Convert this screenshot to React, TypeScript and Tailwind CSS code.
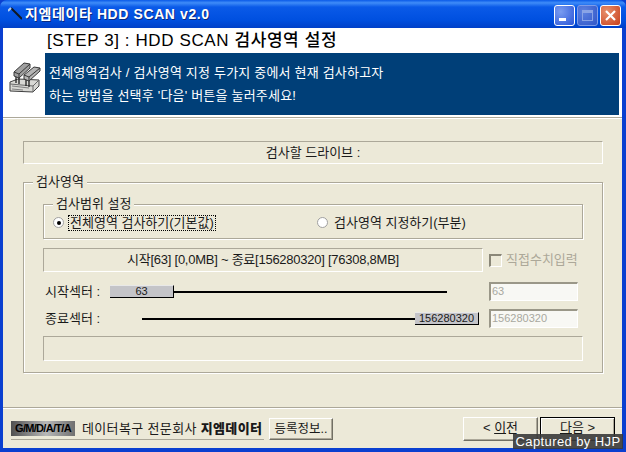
const FONT = "font-['Liberation_Sans','Noto_Sans_CJK_KR',sans-serif]";

function HardwareIcon() {
    return (
        <svg width="32" height="32" viewBox="0 0 32 32">
            <path d="M1 20 L9 17 L30 18 L30 24 L24 30 L1 29 Z" fill="#d8d8d4" stroke="#404040" />
            <path d="M1 22 L24 24 L30 18 M24 24 L24 30" fill="none" stroke="#686868" />
            <path d="M3 24 L20 26 M3 27 L14 28" stroke="#808080" />
            <path d="M5 14 L5 10 L15 1 L21 2 L21 6 L10 16 Z" fill="#a0a0a0" stroke="#383838" />
            <path d="M5 10 L10 12 L21 2 M10 12 L10 16" fill="none" stroke="#383838" />
            <path d="M15 17 L15 13 L25 5 L31 6 L31 9 L20 19 Z" fill="#b4b4b4" stroke="#383838" />
            <path d="M15 13 L20 15 L31 6 M20 15 L20 19" fill="none" stroke="#383838" />
            <path d="M7 15 L7 21 M10 16 L10 22 M17 18 L17 24 M20 19 L20 25" stroke="#202020" strokeWidth="1.3" />
        </svg>
    );
}

function WindowButtons() {
    return (
        <div className="flex gap-[2px] mr-[5px] mt-[2px]">
            <div className="w-[21px] h-[21px] rounded-[3px] border border-white bg-[radial-gradient(circle_at_30%_30%,#7a9cf0,#2a55d8)] flex items-end pl-[4px] pb-[4px]">
                <div className="w-[7px] h-[3px] bg-white" />
            </div>
            <div className="w-[21px] h-[21px] rounded-[3px] border border-[#7f9ce8] bg-[radial-gradient(circle_at_30%_30%,#5f82e0,#2f55c8)] flex items-center justify-center">
                <div className="w-[11px] h-[11px] border border-[#8aa3e6] border-t-[3px]" />
            </div>
            <div className="w-[21px] h-[21px] rounded-[3px] border border-white bg-[radial-gradient(circle_at_30%_30%,#e8906c,#c8401c)] flex items-center justify-center">
                <svg width="11" height="11" viewBox="0 0 11 11">
                    <path d="M1 1 L10 10 M10 1 L1 10" stroke="#fff" strokeWidth="2.2" />
                </svg>
            </div>
        </div>
    );
}

function EtchedPanel({ className, children }: { className: string; children?: React.ReactNode }) {
    return (
        <div className={`border-t border-l border-t-[#aca899] border-l-[#aca899] border-b border-r border-b-white border-r-white flex items-center justify-center ${className}`}>
            {children}
        </div>
    );
}

function GroupBox({ title, className, children }: { title: string; className: string; children: React.ReactNode }) {
    return (
        <div className={`relative border border-[#aca899] shadow-[inset_1px_1px_0_#fff,1px_1px_0_#fff] ${className}`}>
            <span className="absolute left-[9px] -top-[8px] px-[3px] bg-[#ece9d8] leading-[14px] whitespace-nowrap">{title}</span>
            {children}
        </div>
    );
}

function Thumb({ value }: { value: string }) {
    return (
        <div className="w-[64px] h-[13px] flex items-center justify-center text-[11px] bg-[#c4c4c8] border-r border-b border-r-black border-b-black border-t border-t-[#e8e8e8]">
            {value}
        </div>
    );
}

function DisabledInput({ value }: { value: string }) {
    return (
        <div className="w-[89px] h-[19px] bg-[#f8f8f4] border-t-2 border-l-2 border-t-[#9a9788] border-l-[#9a9788] border-b border-r border-b-white border-r-white pl-[1px] text-[11px] text-[#a8a8a0] leading-[15px]">
            {value}
        </div>
    );
}

export default function App() {
    return (
        <div className={`relative w-[626px] h-[452px] overflow-hidden flex flex-col bg-[#0a3fd0] text-[13px] text-[#1a1a1a] ${FONT}`}>
            {/* Title bar */}
            <div className="h-[28px] shrink-0 flex items-center justify-between pl-[8px] rounded-t-[7px] bg-[linear-gradient(180deg,#0a5ae8_0%,#3f8cf8_10%,#0a5ae8_25%,#0050e0_70%,#0040c8_100%)]">
                <div className="flex items-center gap-[3px]">
                    <svg width="14" height="14" viewBox="0 0 14 14">
                        <path d="M3 1 L14 12" stroke="#101820" strokeWidth="2" />
                        <path d="M0 4 L3 1" stroke="#b8d0f0" strokeWidth="2" />
                    </svg>
                    <span className="text-[14px] font-bold tracking-[0.6px] text-white [text-shadow:1px_1px_0_#0a2a80]">지엠데이타 HDD SCAN v2.0</span>
                </div>
                <WindowButtons />
            </div>

            <div className="flex-1 flex flex-col ml-[3px] mr-[4px] mb-[4px] bg-[#ece9d8]">
                {/* Step header */}
                <div className="h-[89px] shrink-0 flex bg-white">
                    <div className="w-[42px] shrink-0 pt-[34px] pl-[6px]">
                        <HardwareIcon />
                    </div>
                    <div className="flex-1 flex flex-col mr-[3px]">
                        <div className="h-[25px] flex items-center pl-[2px] text-[17px] font-medium tracking-[0.6px] text-black whitespace-nowrap">
                            [STEP 3] : HDD SCAN 검사영역 설정
                        </div>
                        <div className="h-[62px] bg-[#003f78] text-white flex flex-col justify-center gap-[8px] pl-[4px] leading-[15px] tracking-[0.2px]">
                            <span>전체영역검사 / 검사영역 지정 두가지 중에서 현재 검사하고자</span>
                            <span>하는 방법을 선택후 '다음' 버튼을 눌러주세요!</span>
                        </div>
                    </div>
                </div>
                <div className="h-[2px] shrink-0 bg-[#aca899] border-b border-b-white" />

                {/* Main content */}
                <div className="flex-1 flex flex-col pl-[20px] pr-[19px] pt-[22px]">
                    <EtchedPanel className="h-[23px] shrink-0">검사할 드라이브 :</EtchedPanel>

                    <GroupBox title="검사영역" className="mt-[18px] h-[191px] shrink-0 pl-[19px] pr-[19px] pt-[21px]">
                        <GroupBox title="검사범위 설정" className="h-[35px] flex items-center pt-[2px] pl-[9px]">
                            <div className="w-[264px] flex items-center gap-[5px]">
                                <span className="w-[11px] h-[11px] rounded-full bg-white border border-[#a0a0a0] flex items-center justify-center">
                                    <span className="w-[4px] h-[4px] rounded-full bg-black" />
                                </span>
                                <span className="outline-1 outline-dotted outline-black leading-[14px] px-[1px]">전체영역 검사하기(기본값)</span>
                            </div>
                            <div className="flex items-center gap-[6px]">
                                <span className="w-[11px] h-[11px] rounded-full bg-white border border-[#a0a0a0]" />
                                <span>검사영역 지정하기(부분)</span>
                            </div>
                        </GroupBox>

                        <div className="flex items-center mt-[9px]">
                            <EtchedPanel className="w-[440px] h-[24px] shrink-0 tracking-[-0.25px]">시작[63] [0,0MB] ~ 종료[156280320] [76308,8MB]</EtchedPanel>
                            <span className="ml-[6px] w-[13px] h-[13px] bg-[#ece9d8] border-t-2 border-l-2 border-t-[#8a8778] border-l-[#8a8778] border-b border-r border-b-white border-r-white" />
                            <span className="ml-[4px] text-[#aca899]">직접수치입력</span>
                        </div>

                        <div className="flex items-center mt-[10px] h-[19px]">
                            <span className="w-[67px] pl-[2px] shrink-0">시작섹터 :</span>
                            <Thumb value="63" />
                            <div className="w-[273px] h-[2px] bg-black" />
                            <div className="ml-[42px]">
                                <DisabledInput value="63" />
                            </div>
                        </div>

                        <div className="flex items-center mt-[8px] h-[19px]">
                            <span className="w-[99px] pl-[2px] shrink-0">종료섹터 :</span>
                            <div className="w-[273px] h-[2px] bg-black" />
                            <Thumb value="156280320" />
                            <div className="ml-[10px]">
                                <DisabledInput value="156280320" />
                            </div>
                        </div>

                        <EtchedPanel className="h-[25px] mt-[8px]" />
                    </GroupBox>

                    {/* Footer */}
                    <div className="mt-[34px] -ml-[20px] -mr-[19px] h-[2px] shrink-0 bg-[#aca899] border-b border-b-white" />
                    <div className="flex -ml-[12px] mt-[9px] -mr-[12px]">
                        <div className="flex items-center w-[253px] h-[22px] border-b border-b-[#aca899] gap-[7px]">
                            <span className="w-[64px] h-[15px] flex items-center justify-center text-[11px] font-bold tracking-[-0.7px] text-black bg-[linear-gradient(90deg,#505050,#b8b8b8_55%,#707070)] whitespace-nowrap">G/M/D/A/T/A</span>
                            <span className="whitespace-nowrap tracking-[0.35px]">데이터복구 전문회사 <b className="font-black">지엠데이터</b></span>
                        </div>
                        <div className="ml-[5px] w-[64px] h-[22px] flex items-center justify-center text-[12.5px] border-t border-l border-t-white border-l-white border-r border-b border-r-[#716f64] border-b-[#716f64] shadow-[inset_-1px_-1px_0_#aca899] whitespace-nowrap">등록정보..</div>
                        <div className="ml-[130px] w-[75px] h-[24px] -mt-[1px] flex items-center justify-center border-t border-l border-t-white border-l-white border-r border-b border-r-[#716f64] border-b-[#716f64] shadow-[inset_-1px_-1px_0_#aca899] pb-[3px]">
                            &lt;&nbsp;<u>이</u>전
                        </div>
                        <div className="ml-[2px] w-[75px] h-[24px] -mt-[1px] flex items-center justify-center border border-black shadow-[inset_1px_1px_0_#fff,inset_-1px_-1px_0_#aca899] pb-[3px]">
                            <u>다</u>음&nbsp;&gt;
                        </div>
                    </div>
                </div>
            </div>

            {/* Screenshot watermark */}
            <div className="absolute left-[513px] top-[434px] w-[110px] h-[15px] bg-[#3a3a3a]/90 text-white text-[13px] leading-[15px] tracking-[0.4px] text-center whitespace-nowrap">Captured by HJP</div>
        </div>
    );
}
